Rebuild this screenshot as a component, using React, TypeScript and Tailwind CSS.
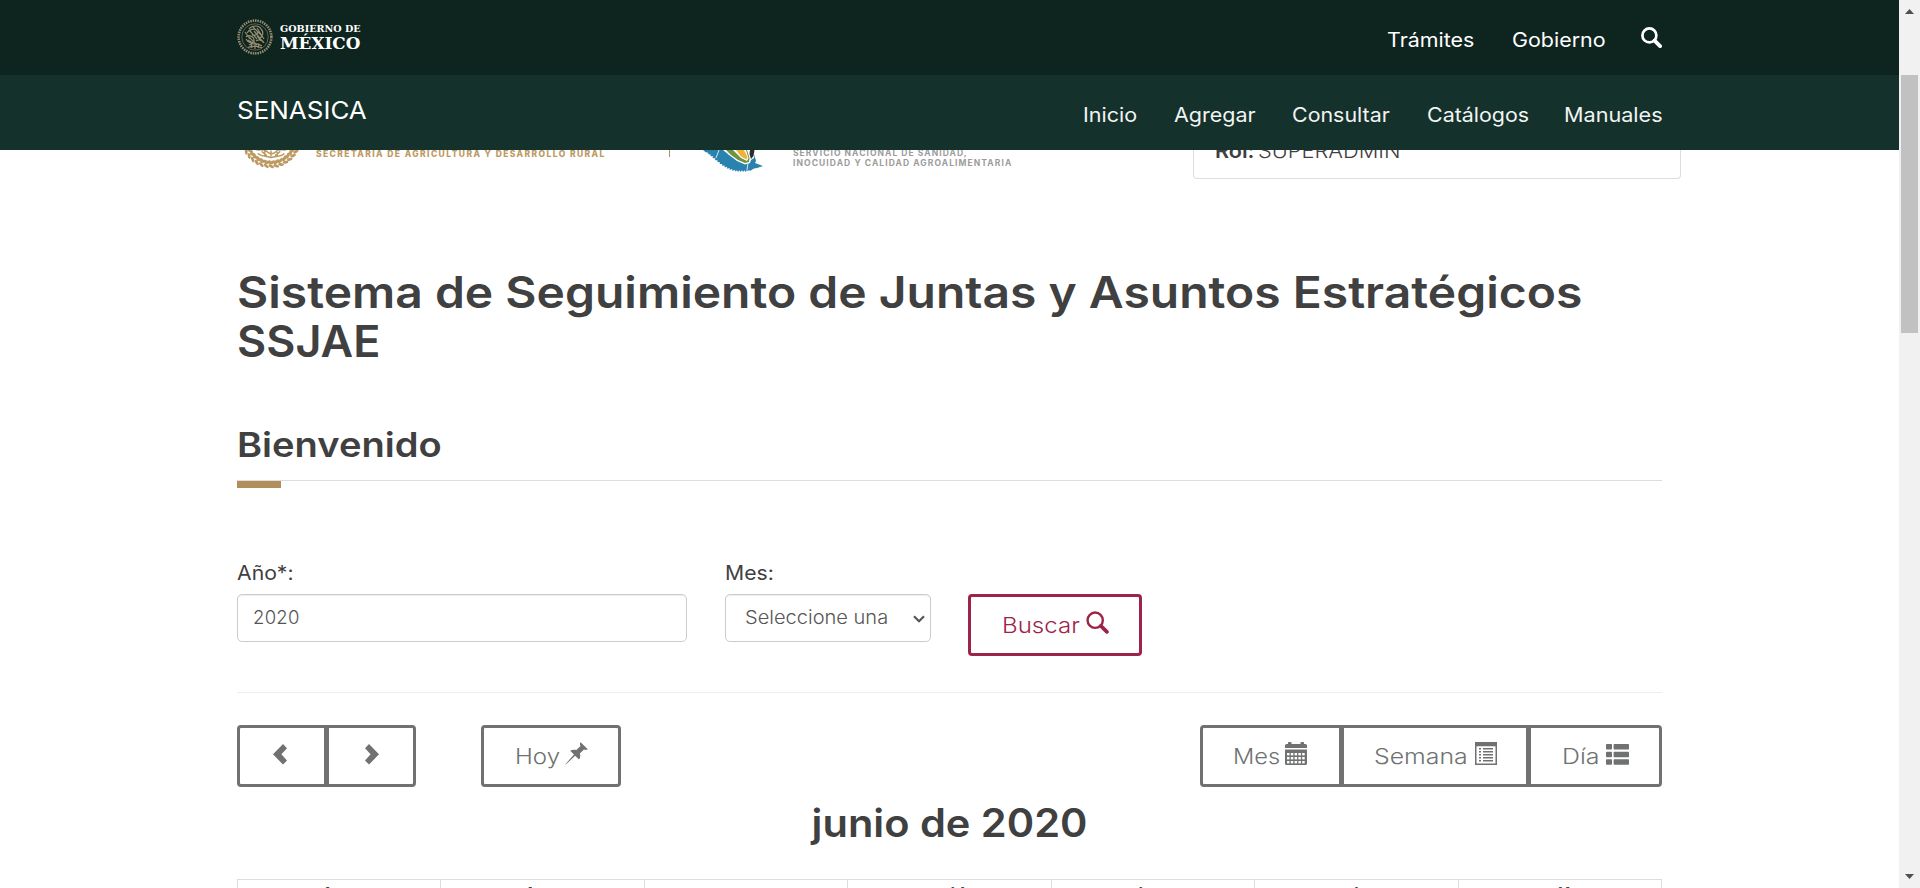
import type { ReactNode } from "react";

const MENU = [
  { label: "Inicio", box: "w-[53px]", stretch: "scale-x-[1.075]" },
  { label: "Agregar", box: "w-[81px]", stretch: "scale-x-[1.075]" },
  { label: "Consultar", box: "w-[97px]", stretch: "scale-x-[1.07]" },
  { label: "Catálogos", box: "w-[100px]", stretch: "scale-x-[1.07]" },
  { label: "Manuales", box: "w-[98px]", stretch: "scale-x-[1.08]" },
];

const WEEKDAYS = ["dom", "lun", "mar", "mié", "jue", "vie", "sáb"];

function Wide({ children, className }: { children: ReactNode; className: string }) {
  return <span className={`inline-block origin-left whitespace-nowrap ${className}`}>{children}</span>;
}

function SearchIcon({ className, width }: { className: string; width: number }) {
  return (
    <svg viewBox="0 0 22 22" className={className} fill="none" stroke="currentColor">
      <circle cx="8.8" cy="8.8" r="7.3" strokeWidth={width} />
      <path d="M14.2 14.2 L20 20" strokeWidth={width + 1.2} strokeLinecap="round" />
    </svg>
  );
}

function Chevron({ flip }: { flip?: boolean }) {
  return (
    <svg viewBox="0 0 14 21" className={flip ? "h-[21px] w-[14px] -scale-x-100" : "h-[21px] w-[14px]"} fill="currentColor">
      <path d="M10 0 L14 4.2 L8.4 10.3 L14 16.4 L10 20.6 L0 10.3 Z" />
    </svg>
  );
}

function PinIcon() {
  return (
    <svg viewBox="0 0 23 23" className="h-[23px] w-[23px]" fill="currentColor">
      <path d="M15.6 0.3 L22.8 7.2 C21.4 8.2 20 8 19 7.4 L14.8 11.6 C15.6 13.8 15.3 15.8 14 17.6 L10.2 13.8 L0.6 22.6 L0.3 22.3 L9 12.6 L5.2 8.8 C7.2 7.6 9.2 7.4 11.3 8.1 L15.5 4 C14.7 2.6 14.7 1.4 15.6 0.3 Z" />
    </svg>
  );
}

function CalendarIcon() {
  return (
    <svg viewBox="0 0 22 23" className="h-[23px] w-[22px]">
      <path fill="currentColor" d="M0 6 V3.5 Q0 2 1.5 2 H3 V0.8 Q3 0 4 0 H5.5 Q6.5 0 6.5 0.8 V2 H15.5 V0.8 Q15.5 0 16.5 0 H18 Q19 0 19 0.8 V2 H20.5 Q22 2 22 3.5 V6 Z M0 7.5 H22 V21.5 Q22 23 20.5 23 H1.5 Q0 23 0 21.5 Z" />
      <g fill="#fff">
        {[11, 15, 19].map((y) => [2, 5.8, 9.6, 13.4, 17.2].map((x) => <rect key={`${x}-${y}`} x={x} y={y} width="2.5" height="2.4" />))}
      </g>
    </svg>
  );
}

function ListAltIcon() {
  return (
    <svg viewBox="0 0 22 23" className="h-[23px] w-[22px]" fill="currentColor">
      <path fillRule="evenodd" d="M0 0 H22 V23 H0 Z M1.5 4.2 V21.5 H20.5 V4.2 Z" />
      {[6, 9, 12, 15, 18].map((y) => (
        <g key={y}>
          <rect x="4" y={y} width="2" height="1.5" />
          <rect x="8" y={y} width="10" height="1.5" />
        </g>
      ))}
    </svg>
  );
}

function ThListIcon() {
  return (
    <svg viewBox="0 0 23 21" className="h-[21px] w-[23px]" fill="currentColor">
      {[0, 7.7, 15.2].map((y) => (
        <g key={y}>
          <rect x="0" y={y} width="6" height="5.6" rx="0.8" />
          <rect x="7.6" y={y} width="15.4" height="5.6" rx="0.8" />
        </g>
      ))}
    </svg>
  );
}

function Seal({ className }: { className: string }) {
  return (
    <svg viewBox="0 0 36 36" className={className} fill="none" stroke="currentColor">
      <circle cx="18" cy="18" r="16.4" strokeWidth="2.6" strokeDasharray="1.5 0.9" />
      <circle cx="18" cy="18" r="13.2" strokeWidth="0.6" />
      <path strokeWidth="1.2" d="M12 10 C15 6 22 6 24 10 C27 13 26 17 23 19 M10 14 C12 10 18 9 20 12 C22 15 18 17 15 16 M9 18 C12 15 18 18 17 22 C16 25 11 24 9 20 M13 12 L20 20 M16 8 L25 17 M20 9 L27 20 M19 22 C22 20 26 21 27 24 M12 26 C15 24 21 24 25 27 M11 28.5 C15 27 21 27 25 29 M18 24 V30 M14 24.5 L15 29 M22 24.5 L21 29 M11 21 L16 24 M20 17 L24 22 M8 13 L13 20 M17 12 L26 23 M12 18 L20 26" />
    </svg>
  );
}

function WheatSeal() {
  const leaves = Array.from({ length: 17 }, (_, i) => 8 + i * 10.2);
  return (
    <svg viewBox="0 0 60 60" className="h-[62px] w-[62px] text-[#bc9a62]" fill="none" stroke="currentColor">
      {leaves.map((a) => (
        <g key={a} transform={`rotate(${a} 30 30)`}>
          <ellipse cx="53.6" cy="29" rx="1.5" ry="3.2" fill="currentColor" stroke="none" transform="rotate(-28 53.6 29)" />
          <ellipse cx="57.4" cy="30" rx="1.4" ry="2.9" fill="currentColor" stroke="none" transform="rotate(28 57.4 30)" />
        </g>
      ))}
      <path strokeWidth="1.4" d="M13 40 C18 44 22 39 26 43 C29 46 32 46 35 43 C39 39 43 44 47 40 M17 45 C22 49 27 47 30 49 C34 47 39 49 43 45 M24 42 V48 M30 42 V48 M36 42 V48 M21 43 L26 47 M39 43 L34 47" />
    </svg>
  );
}

function Bird() {
  return (
    <svg viewBox="0 0 60 22" className="h-[22px] w-[60px]">
      <path
        fill="#2983ae"
        d="M0 0 H50 L53 11 L52 13 L60 16 L54 18 L51 18.5 L47 21 L46 19.8 L45 21.5 L44 20 L42.5 22 L41.5 20.3 L40 22 L39 20.3 L37.5 22 L36.5 20.3 L35 22 L34 20.2 L32.5 21.6 L31.6 19.8 L29.6 21 L29 19 L26.8 20 L26.5 18 L24.2 18.8 L24 16.8 L21.6 17.4 L21.6 15.4 L19 15.8 L19.2 14 L16.6 14 L17 12.2 L14.2 12 L14.8 10.4 L11.8 10 L12.6 8.4 L9.4 8 L10.4 6.6 L7 6 L8 4.8 L4.6 4 L5.8 3 L2.4 2 Z"
      />
      <path fill="#fff" d="M20 0 H52 L51 8 L48 10 L47 13 L42 14.5 L34 11 L26 5 Z" />
      <path fill="#6f9340" d="M23 0 H44 L46.5 8 L46 12 L42 13 L35 10 L28 5 Z" />
      <path fill="#fff" d="M30 0 H43 L45.5 8 L44 11 L38 8 Z" />
      <path fill="#efb23a" d="M33 0 H41 L44.5 7 L43.5 9.5 L38 6.5 Z" />
      <path fill="#2f2a2c" d="M47 0 H51.5 L50.5 6 L48 9 L46.5 4 Z" />
      <path stroke="#fff" strokeWidth="0.8" fill="none" d="M16 0 L13 8 M45 13 L44 20" />
    </svg>
  );
}

export default function App() {
  return (
    <div className="flex h-[888px] w-[1920px] overflow-hidden bg-white font-['Inter',sans-serif] text-[#404041]">
      <div className="h-full w-[1899px] shrink-0 overflow-hidden">
        <header className="text-white">
          <div className="h-[75px] bg-[#0e241f]">
            <div className="mx-auto flex h-full w-[1425px] justify-between">
              <div className="flex pt-[19px]">
                <Seal className="h-[36px] w-[36px] text-[#958d70]" />
                <div className="ml-[7px] flex flex-col items-start font-['DejaVu_Serif',serif] font-bold">
                  <Wide className="mt-[4px] h-[11px] scale-x-[1.01] text-[9.5px] leading-[11px]">GOBIERNO DE</Wide>
                  <Wide className="h-[18px] scale-x-[1.05] text-[16px] leading-[20px]">MÉXICO</Wide>
                </div>
              </div>
              <nav className="flex text-[19.5px] font-normal leading-[28px]">
                <a className="mr-[38px] mt-[26px] w-[87px]"><Wide className="scale-x-[1.1]">Trámites</Wide></a>
                <a className="mr-[36px] mt-[26px] w-[93px]"><Wide className="scale-x-[1.1]">Gobierno</Wide></a>
                <SearchIcon className="mt-[27px] h-[21px] w-[21px]" width={2.8} />
              </nav>
            </div>
          </div>
          <div className="h-[75px] bg-[#14312b]">
            <div className="mx-auto flex h-full w-[1425px] justify-between">
              <div className="pt-[19px] text-[24.5px] font-normal leading-[32px]">
                <Wide className="scale-x-[1.06]">SENASICA</Wide>
              </div>
              <nav className="flex gap-[37.5px] pt-[26px] text-[20px] font-normal leading-[28px] text-[#f2f4f3]">
                {MENU.map((m) => (
                  <a key={m.label} className={m.box}><Wide className={m.stretch}>{m.label}</Wide></a>
                ))}
              </nav>
            </div>
          </div>
        </header>

        <div className="mx-auto flex h-[30px] w-[1425px]">
          <div className="flex h-[30px] w-[956px] overflow-hidden">
            <div className="ml-[3px] mt-[-43px]"><WheatSeal /></div>
            <span className="ml-[14px] mt-[-1px] w-[353px] whitespace-nowrap text-[8.5px] font-extrabold leading-[10px] tracking-[1.4px] text-[#bc9a62]">
              SECRETARÍA DE AGRICULTURA Y DESARROLLO RURAL
            </span>
            <div className="mr-[33px] h-[7px] w-px bg-[#b38e5d]" />
            <Bird />
            <div className="ml-[30px] mt-[-1px] flex flex-col whitespace-nowrap text-[8.5px] font-bold leading-[9.5px] text-[#9c9c9c]">
              <span className="tracking-[1.05px]">SERVICIO NACIONAL DE SANIDAD,</span>
              <span className="tracking-[1.08px]">INOCUIDAD Y CALIDAD AGROALIMENTARIA</span>
            </div>
          </div>
          <div className="-mr-[19px] h-[29px] w-[488px] shrink-0 overflow-hidden rounded-b-[4px] border border-t-0 border-[#ddd] pl-[21px]">
            <div className="-mt-[13px] flex text-[20px] leading-[28px]">
              <b className="w-[43px] font-semibold"><Wide className="scale-x-[1.08]">Rol:</Wide></b>
              <span className="font-light"><Wide className="scale-x-[1.09]">SUPERADMIN</Wide></span>
            </div>
          </div>
        </div>

        <main className="mx-auto w-[1425px]">
          <h1 className="flex flex-col pt-[88px] text-[44px] font-semibold leading-[49px]">
            <Wide className="scale-x-[1.091]">Sistema de Seguimiento de Juntas y Asuntos Estratégicos</Wide>
            <Wide className="scale-x-[1.02]">SSJAE</Wide>
          </h1>
          <h2 className="mt-[59px] flex h-[56px] flex-col border-b border-[#ddd] text-[34px] font-semibold leading-[40px]">
            <Wide className="scale-x-[1.12]">Bienvenido</Wide>
          </h2>
          <div className="h-[7px] w-[44px] bg-[#b38e5d]" />

          <form className="mt-[71px] flex h-[98px] text-[20px] font-normal leading-[28px]">
            <div className="w-[450px]">
              <label className="flex h-[35px]"><Wide className="scale-x-[1.06]">Año*:</Wide></label>
              <input
                readOnly
                value="2020"
                className="block h-[48px] w-full rounded-[5px] border border-[#ccc] px-[15px] pb-[2px] text-[18.5px] font-light tracking-[0.288px] text-[#555] shadow-[inset_0_1px_1px_rgba(0,0,0,0.075)] outline-none"
              />
            </div>
            <div className="ml-[38px] w-[206px]">
              <label className="flex h-[35px]"><Wide className="scale-x-[1.06]">Mes:</Wide></label>
              <div className="flex h-[48px] items-center justify-between rounded-[5px] border border-[#ccc] pb-[2px] pl-[19px] pr-[5px] text-[18.5px] font-light text-[#555] shadow-[inset_0_1px_1px_rgba(0,0,0,0.075)]">
                <Wide className="scale-x-[1.083]">Seleccione una</Wide>
                <svg viewBox="0 0 12 8" className="mt-[3px] h-[8px] w-[12px]" fill="none" stroke="#555" strokeWidth="2.2">
                  <path d="M1 1.2 L6 6.2 L11 1.2" />
                </svg>
              </div>
            </div>
            <button className="ml-[37px] mt-[35px] flex h-[62px] w-[174px] rounded-[4px] border-[3px] border-[#9d2449] pl-[31px] pt-[14px] text-[21.5px] font-light text-[#9d2449]">
              <span className="w-[84px] text-left"><Wide className="scale-x-[1.12]">Buscar</Wide></span>
              <SearchIcon className="h-[23px] w-[23px]" width={2.3} />
            </button>
          </form>

          <div className="mt-[35px] h-px bg-[#eee]" />

          <div className="mt-[32px] flex h-[62px] text-[21.5px] font-light leading-[28px] text-[#6f7271]">
            <button className="flex w-[90px] justify-center rounded-l-[4px] border-[3px] border-[#6f7271] pr-[4px] pt-[16px]"><Chevron /></button>
            <button className="-ml-px flex w-[90px] justify-center rounded-r-[4px] border-[3px] border-[#6f7271] pl-[2px] pt-[16px]"><Chevron flip /></button>
            <button className="ml-[65px] flex w-[140px] rounded-[4px] border-[3px] border-[#6f7271] pl-[31px] pt-[14px]">
              <span className="w-[50px] text-left"><Wide className="scale-x-[1.12]">Hoy</Wide></span>
              <PinIcon />
            </button>
            <div className="ml-auto flex">
              <button className="flex w-[142px] rounded-l-[4px] border-[3px] border-[#6f7271] pl-[30px] pt-[14px]">
                <span className="w-[52px] text-left"><Wide className="scale-x-[1.1]">Mes</Wide></span>
                <CalendarIcon />
              </button>
              <button className="-ml-px flex w-[190px] border-[3px] border-[#6f7271] pl-[30px] pt-[14px]">
                <span className="w-[101px] text-left"><Wide className="scale-x-[1.155]">Semana</Wide></span>
                <ListAltIcon />
              </button>
              <button className="-ml-[5px] flex w-[136px] rounded-r-[4px] border-[3px] border-l-[5px] border-[#6f7271] pl-[31px] pt-[14px]">
                <span className="w-[44px] text-left"><Wide className="scale-x-[1.16]">Día</Wide></span>
                <span className="pt-[2px]"><ThListIcon /></span>
              </button>
            </div>
          </div>

          <h2 className="mt-[14px] flex justify-center text-[39px] font-semibold leading-[44px]">
            <span className="inline-block scale-x-[1.065]">junio de 2020</span>
          </h2>

          <div className="mt-[34px] grid grid-cols-7 border-l border-t border-[#ddd]">
            {WEEKDAYS.map((d) => (
              <div key={d} className="h-[40px] border-r border-[#ddd] pt-px text-center text-[20px] font-bold leading-[28px]">{d}</div>
            ))}
          </div>
        </main>
      </div>

      <aside className="flex h-full w-[21px] shrink-0 flex-col bg-[#f1f1f1]">
        <svg viewBox="0 0 9 5" className="ml-[6px] mt-[9px] h-[5px] w-[9px]" fill="#505050"><path d="M0 5 L4.5 0 L9 5 Z" /></svg>
        <div className="ml-[2px] mt-[61px] h-[258px] w-[17px] bg-[#c1c1c1]" />
        <svg viewBox="0 0 9 5" className="mb-[9px] ml-[6px] mt-auto h-[5px] w-[9px]" fill="#505050"><path d="M0 0 L9 0 L4.5 5 Z" /></svg>
      </aside>
    </div>
  );
}
